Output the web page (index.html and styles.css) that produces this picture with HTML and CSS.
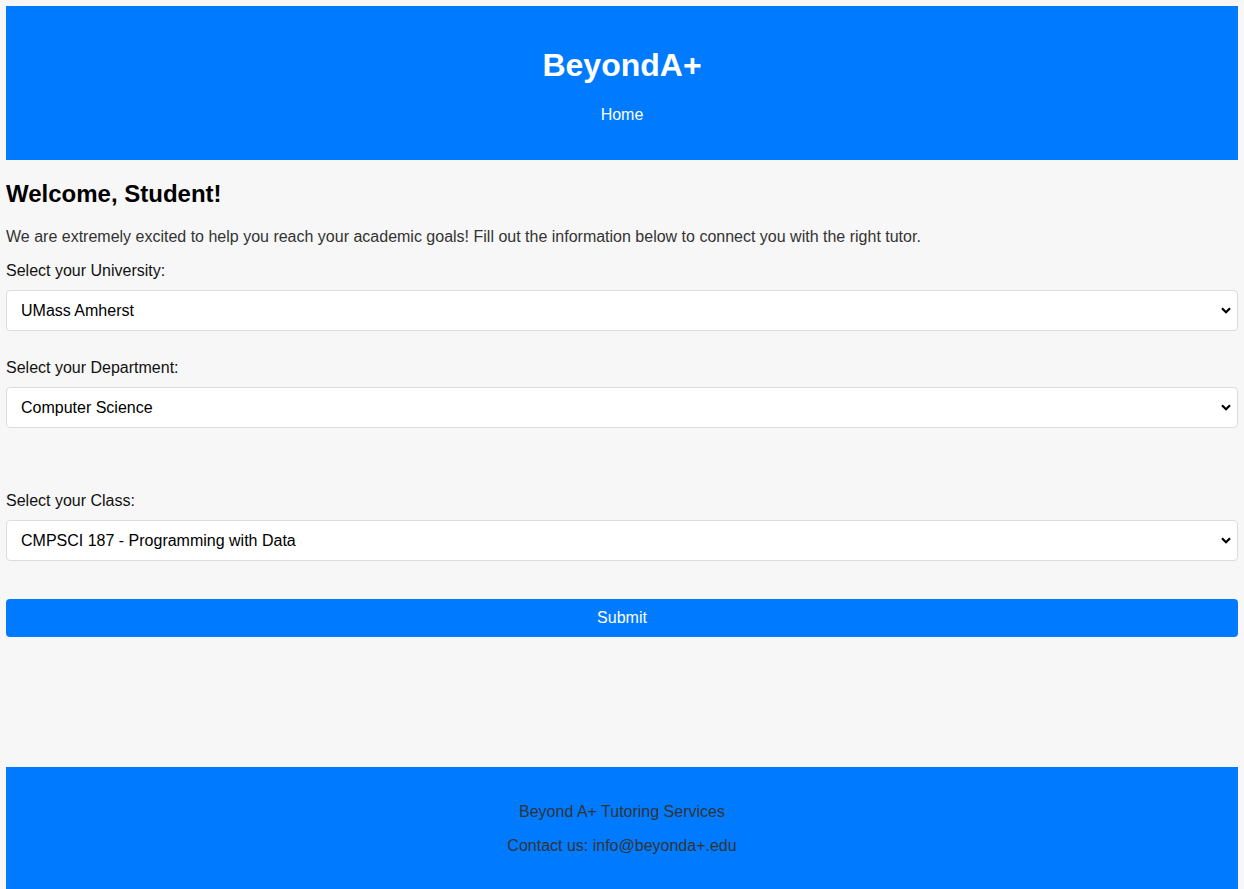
FILE: index.html
```html
<!DOCTYPE html>
<html lang="en">
<head>
    <meta charset="UTF-8">
    <meta name="viewport" content="width=device-width, initial-scale=1.0">
    <title>BeyondA+</title>
    <link rel="stylesheet" href="styles.css">
</head>
<body>
    <header class="site-header">
        <h1>BeyondA+</h1>
        <nav>
            <ul class="nav-list">
                <li><a href="#">Home</a></li>
            </ul>
        </nav>
    </header>

    <main class="content">
        <h2>Welcome, Student!</h2>
        <p class="intro">We are extremely excited to help you reach your academic goals! Fill out the information below to connect you with the right tutor.</p>

        <form class="tutor-form">
            <label for="university">Select your University:</label>
            <select id="university">
                <option>UMass Amherst</option>
            </select>

            <label for="department">Select your Department:</label>
            <select id="department">
                <option>Computer Science</option>
            </select>

            <div class="spacer"></div>

            <label for="class">Select your Class:</label>
            <select id="class">
                <option>CMPSCI 187 - Programming with Data</option>
            </select>

            <button type="button" class="submit-btn">Submit</button>
        </form>
    </main>

    <footer class="site-footer">
        <p>Beyond A+ Tutoring Services</p>
        <p>Contact us: info@beyonda+.edu</p>
    </footer>
</body>
</html>
```

FILE: styles.css
```css
body {
    margin: 6px;
    background-color: #f7f7f7;
    color: #333;
    font-family: "Liberation Sans", Arial, sans-serif;
    font-size: 16px;
}
.site-header {
    background-color: #007bff;
    color: white;
    text-align: center;
    padding: 20px;
}
.site-header h1 {
    font-size: 32px;
    margin: 0.67em 0;
}
.nav-list {
    list-style: none;
    margin: 16px 0;
    padding: 0;
}
.nav-list a {
    color: white;
    text-decoration: none;
}
.content h2 {
    color: black;
    font-size: 24px;
    margin: 20px 0;
}
.intro {
    margin: 16px 0;
}
.tutor-form {
    margin-bottom: 130px;
}
.tutor-form label {
    display: block;
    color: #111;
    margin-bottom: 10px;
}
.tutor-form select {
    display: block;
    width: 100%;
    box-sizing: border-box;
    height: 41px;
    padding: 0 14px;
    font-family: inherit;
    font-size: 16px;
    color: black;
    background-color: white;
    border: 1px solid #dcdcdc;
    border-radius: 4px;
    margin-bottom: 28px;
    -webkit-appearance: none;
    appearance: none;
    background-image: url("data:image/svg+xml;utf8,<svg xmlns='http://www.w3.org/2000/svg' width='10' height='7' viewBox='0 0 10 7'><path d='M1 1.2 L5 5.2 L9 1.2' fill='none' stroke='black' stroke-width='2.2'/></svg>");
    background-repeat: no-repeat;
    background-position: right 6px center;
}
.spacer {
    height: 36px;
}
.submit-btn {
    display: block;
    width: 100%;
    margin-top: 38px;
    padding: 10px;
    height: 38px;
    background-color: #007bff;
    color: white;
    border: none;
    border-radius: 4px;
    font-family: inherit;
    font-size: 16px;
    cursor: pointer;
}
.site-footer {
    background-color: #007bff;
    color: #333;
    text-align: center;
    padding: 20px;
}
.site-footer p {
    margin: 16px 0;
}
```
